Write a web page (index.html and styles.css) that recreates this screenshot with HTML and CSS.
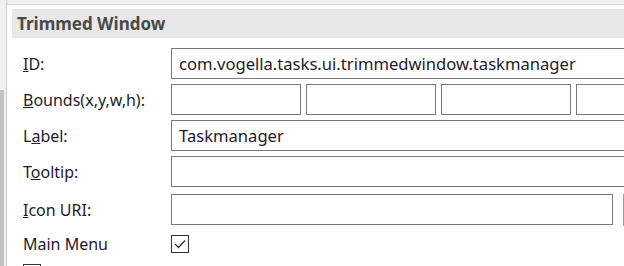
FILE: index.html
```html
<!DOCTYPE html>
<html lang="en">
<head>
    <meta charset="UTF-8">
    <title>Trimmed Window</title>
    <link rel="stylesheet" href="styles.css">
</head>
<body>
    <div class="side">
        <div class="thumb"></div>
    </div>
    <div class="panel">
        <h1 class="title">Trimmed Window</h1>
        <div class="form">
            <div class="row">
                <label class="lbl"><u>I</u>D:</label>
                <input class="field wide" type="text" value="com.vogella.tasks.ui.trimmedwindow.taskmanager">
            </div>
            <div class="row">
                <label class="lbl"><u>B</u>ounds(x,y,w,h):</label>
                <div class="bounds">
                    <input class="field small" type="text">
                    <input class="field small" type="text">
                    <input class="field small" type="text">
                    <input class="field small" type="text">
                </div>
            </div>
            <div class="row">
                <label class="lbl">L<u>a</u>bel:</label>
                <input class="field wide" type="text" value="Taskmanager">
            </div>
            <div class="row">
                <label class="lbl">T<u>o</u>oltip:</label>
                <input class="field wide" type="text">
            </div>
            <div class="row icon-row">
                <label class="lbl"><u>I</u>con URI:</label>
                <input class="field uri" type="text">
                <div class="find"></div>
            </div>
            <div class="row check-row">
                <label class="lbl">Main Menu</label>
                <span class="check on">
                    <svg width="12" height="10" viewBox="0 0 12 10"><path d="M1 5 L4.5 8.5 L11 1.5" fill="none" stroke="#333" stroke-width="1.3"/></svg>
                </span>
            </div>
            <div class="row check-row last">
                <span class="check"></span>
            </div>
        </div>
    </div>
</body>
</html>
```

FILE: styles.css
```css
body {
    margin: 0;
    width: 624px;
    height: 266px;
    overflow: hidden;
    background-color: #f0f0f0;
    display: flex;
    font-family: "Noto Sans", "Open Sans", sans-serif;
    font-size: 16px;
    color: #1c1c2c;
}

.side {
    width: 6px;
    flex: none;
    padding-top: 90px;
    border-right: 1px solid #c9c9c9;
}

.thumb {
    width: 4px;
    height: 176px;
    background-color: #c2c2c2;
}

.panel {
    flex: none;
    width: 617px;
    overflow: hidden;
    margin-top: 4px;
    border-top: 1px solid #dadada;
    background-color: #fff;
    padding: 4px 0 0 5px;
    box-sizing: border-box;
    height: 262px;
}

.title {
    margin: 0;
    height: 29px;
    line-height: 29px;
    padding-left: 5px;
    background-color: #e8e8e8;
    font-size: 17px;
    font-weight: bold;
    color: #4a4a4a;
}

.form {
    padding: 10px 0 0 11px;
    display: flex;
    flex-direction: column;
    gap: 5px;
}

.row {
    display: flex;
    align-items: center;
    height: 31px;
}

.lbl {
    width: 148px;
    flex: none;
}

.field {
    flex: none;
    box-sizing: border-box;
    height: 31px;
    border: 1px solid #7a7a7a;
    padding: 0 7px;
    margin: 0;
    font-family: inherit;
    font-size: 16.6px;
    color: #1c1c2c;
    outline: none;
}

.wide {
    width: 560px;
}

.bounds {
    display: flex;
    gap: 5px;
}

.small {
    width: 130px;
}

.icon-row {
    margin-top: 2px;
}

.uri {
    width: 442px;
}

.find {
    flex: none;
    margin-left: 10px;
    width: 1px;
    height: 32px;
    background-color: #9a9a9a;
}

.check-row {
    height: 24px;
    margin-top: 2px;
}

.last {
    margin-top: 3px;
    align-items: flex-start;
}

.check {
    box-sizing: border-box;
    width: 18px;
    height: 18px;
    border: 1px solid #333;
    background-color: #fff;
    display: flex;
    align-items: center;
    justify-content: center;
}
```
